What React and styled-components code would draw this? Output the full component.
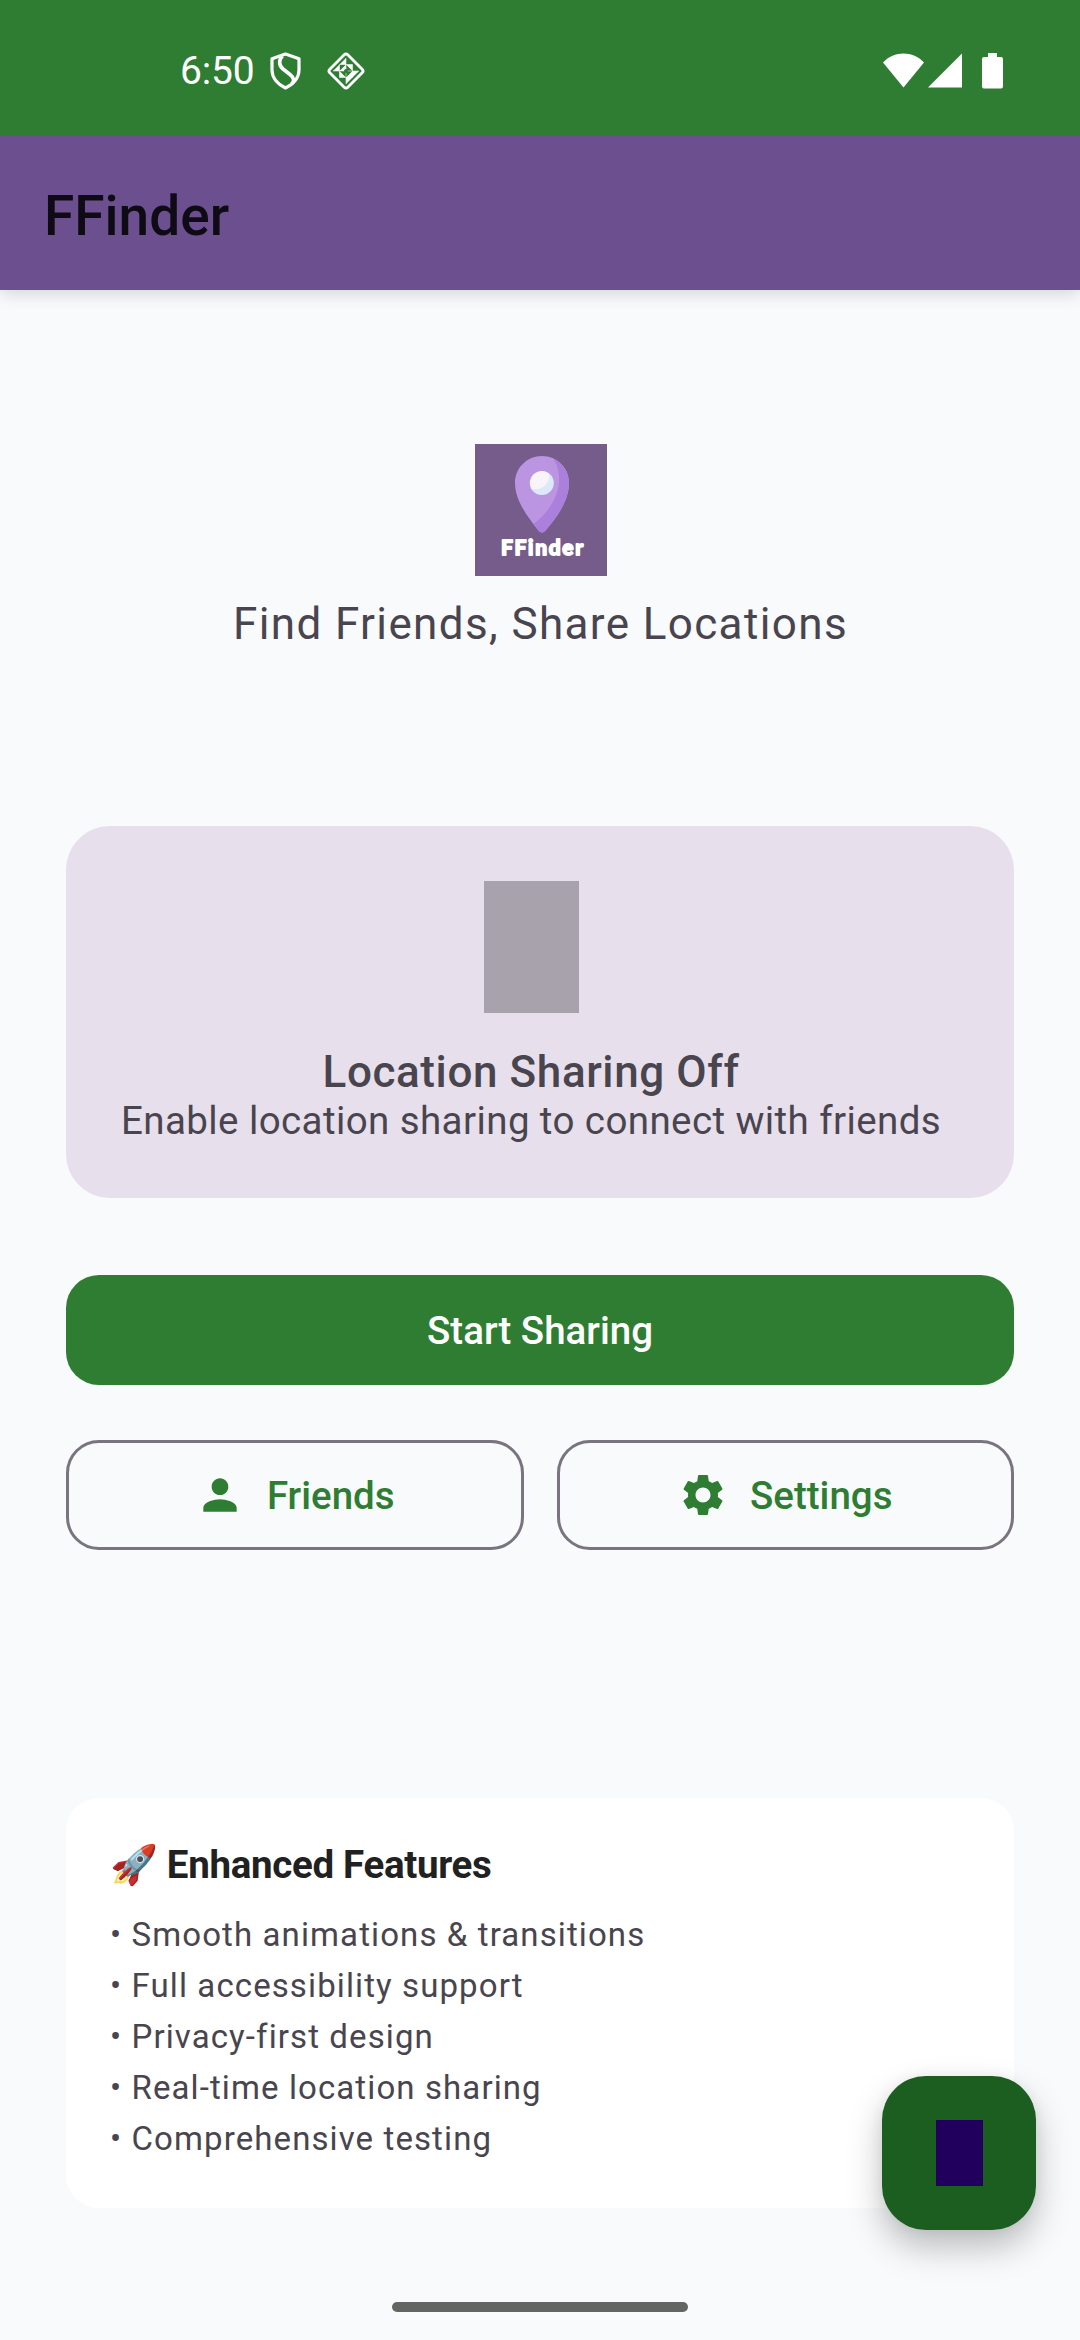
import React from "react";
import styled, { createGlobalStyle } from "styled-components";

const Global = createGlobalStyle`
  *, *::before, *::after { box-sizing: border-box; }
  body { margin: 0; background: #f8fafc; font-family: Roboto, "Noto Sans", sans-serif; color: #49454f; }
  h1, h2, h3, p, ul { margin: 0; padding: 0; font-weight: 400; }
  button { font: inherit; margin: 0; padding: 0; cursor: pointer; }
`;

const Screen = styled.div`
  position: relative;
  width: 1080px;
  height: 2340px;
  display: flex;
  flex-direction: column;
  overflow: hidden;
  background: #f8fafc;
`;

const StatusBar = styled.header`
  position: relative;
  z-index: 1;
  flex: none;
  height: 136px;
  padding: 6px 77px 0 180px;
  display: flex;
  align-items: center;
  background: #2e7d32;
  color: #fff;
`;

const Clock = styled.span`
  width: 90px;
  font-size: 39px;
  line-height: 46px;
  letter-spacing: -0.2px;
`;

const StatusIcons = styled.div`
  display: flex;
  align-items: center;
  gap: ${(p) => p.$gap}px;
  margin-left: ${(p) => (p.$end ? "auto" : "0")};
  svg { display: block; }
`;

const AppBar = styled.div`
  flex: none;
  height: 154px;
  padding: 5px 44px 0;
  display: flex;
  align-items: center;
  background: #6c4f8e;
  box-shadow: 0 4px 16px rgba(0, 0, 0, 0.15);
`;

const AppTitle = styled.h1`
  font-size: 55px;
  line-height: 64px;
  font-weight: 500;
  color: #0f0b14;
`;

const Content = styled.main`
  flex: 1;
  padding: 154px 66px 0;
  display: flex;
  flex-direction: column;
`;

const Hero = styled.section`
  height: 382px;
  display: flex;
  flex-direction: column;
  align-items: center;
`;

const Logo = styled.svg`
  display: block;
  margin-left: 2px;
`;

const Tagline = styled.p`
  margin: 22px 0 0 1px;
  font-size: 44px;
  line-height: 52px;
  letter-spacing: 1.375px;
  white-space: nowrap;
`;

const StatusCard = styled.section`
  height: 372px;
  padding: 55px;
  border-radius: 44px;
  background: #e7dfeb;
  display: flex;
`;

const StatusColumn = styled.div`
  display: flex;
  flex-direction: column;
  align-items: center;
`;

const StatusGlyph = styled.div`
  width: 95px;
  height: 132px;
  margin-bottom: 33px;
  background: #a8a2ad;
`;

const StatusTitle = styled.h2`
  font-size: 44px;
  line-height: 52px;
  font-weight: 500;
  letter-spacing: 0.6px;
`;

const StatusText = styled.p`
  font-size: 38.5px;
  line-height: 45px;
  letter-spacing: 0.41px;
  white-space: nowrap;
`;

const PrimaryButton = styled.button`
  height: 110px;
  margin-top: 77px;
  border: 0;
  border-radius: 33px;
  background: #2e7d32;
  color: #fff;
  font-size: 38.5px;
  font-weight: 500;
`;

const ButtonRow = styled.div`
  display: flex;
  gap: 33px;
  margin-top: 55px;
`;

const OutlineButton = styled.button`
  flex: 1;
  height: 110px;
  border: 3px solid #79747e;
  border-radius: 33px;
  background: transparent;
  color: #2e7d32;
  display: flex;
  align-items: center;
  justify-content: center;
  gap: 22px;
  font-size: 38.5px;
  font-weight: 500;
`;

const Features = styled.section`
  height: 410px;
  margin-top: 248px;
  padding: 44px;
  border-radius: 33px;
  background: #fff;
`;

const FeaturesTitle = styled.h3`
  height: 45px;
  font-family: Roboto, "Noto Color Emoji", sans-serif;
  font-size: 38.5px;
  line-height: 45px;
  font-weight: 700;
  letter-spacing: -0.32px;
  color: #212121;
  white-space: nowrap;
`;

const FeatureList = styled.ul`
  margin-top: 22px;
  list-style: none;
  font-size: 33px;
  line-height: 51px;
  letter-spacing: 1.1px;
`;

const Fab = styled.button`
  position: absolute;
  right: 44px;
  bottom: 110px;
  width: 154px;
  height: 154px;
  border: 0;
  border-radius: 44px;
  background: #1b5e20;
  display: grid;
  place-items: center;
  box-shadow: 0 17px 34px rgba(0, 0, 0, 0.25), 0 0 14px rgba(0, 0, 0, 0.05);
`;

const FabGlyph = styled.span`
  width: 47px;
  height: 66px;
  margin-left: 1px;
  background: #21005d;
`;

const NavBar = styled.nav`
  flex: none;
  height: 66px;
  padding-top: 28px;
  display: flex;
  justify-content: center;
`;

const NavHandle = styled.div`
  width: 296px;
  height: 10px;
  border-radius: 5px;
  background: #636563;
`;

const ShieldIcon = () => (
  <svg width="31" height="38" viewBox="0 0 31 38" fill="none" stroke="#fff" strokeWidth="3.2" strokeLinejoin="round">
    <path d="M15.5 2 L29 6.8 V18 C29 26 23 32.5 15.5 36 C8 32.5 2 26 2 18 V6.8 Z" />
    <path d="M12.5 4 C8.5 8 8.800 13.500 13 17 L20 22.500 C24.500 26 24.500 29.500 21.500 32" strokeWidth="3.6" />
  </svg>
);

const DiamondIcon = () => (
  <svg width="40" height="40" viewBox="0 0 40 40" fill="none">
    <rect x="7.3" y="7.3" width="25.4" height="25.4" rx="2.5" transform="rotate(45 20 20)" stroke="#fff" strokeWidth="2.8" />
    <g fill="#fff">
      <path d="M20 7 V13.5 H13.5Z M13.5 13.5 V20 H7Z M20 13.5 H26.5 V20Z M20 13.5 V20 H13.5Z" />
      <path d="M33 20 L26.5 26.5 V20Z M26.5 20 V26.5 H20Z M20 26.5 H26.5 L20 33Z M13.5 20 L20 26.5 H13.5Z" />
    </g>
    <path d="M13.5 13.5 H26.5 V26.5 H13.5Z M20 7 V33 M7 20 H33" stroke="#fff" strokeOpacity=".55" strokeWidth="1" />
    <circle cx="20" cy="20" r="2" fill="#2e7d32" />
  </svg>
);

const WifiIcon = () => (
  <svg width="41" height="36" viewBox="0 0 41 36" fill="#fff">
    <path d="M0 9.5 C11-2.5 30-2.5 41 9.5 L20.5 34.500Z" />
  </svg>
);

const SignalIcon = () => (
  <svg width="34" height="36" viewBox="0 0 34 36" fill="#fff">
    <path d="M34 .5 V34.500 H0Z" />
  </svg>
);

const Battery = styled.svg`
  margin-left: 16px;
`;

const BatteryIcon = () => (
  <Battery width="21" height="37" viewBox="0 0 21 37" fill="#fff">
    <path d="M6 0 H15 V4 H19 Q21 4 21 6 V33.500 Q21 35.500 19 35.500 H2 Q0 35.500 0 33.500 V6 Q0 4 2 4 H6Z" />
  </Battery>
);

const PersonIcon = () => (
  <svg width="50" height="50" viewBox="0 0 24 24" fill="currentColor">
    <path d="M12 12c2.210 0 4-1.790 4-4s-1.790-4-4-4-4 1.790-4 4 1.790 4 4 4zm0 2c-2.670 0-8 1.340-8 4v2h16v-2c0-2.660-5.330-4-8-4z" />
  </svg>
);

const GearIcon = () => (
  <svg width="50" height="50" viewBox="0 0 24 24" fill="currentColor">
    <path d="M19.140 12.940c.04-.3.060-.61.060-.94 0-.32-.02-.64-.07-.94l2.030-1.580c.18-.14.23-.41.120-.61l-1.920-3.320c-.12-.22-.37-.29-.59-.22l-2.390.96c-.5-.38-1.030-.7-1.620-.94L14.400 2.810c-.04-.24-.24-.41-.48-.41h-3.840c-.24 0-.43.170-.47.410L9.250 5.350c-.59.240-1.130.57-1.620.94l-2.390-.96c-.22-.08-.47 0-.59.220L2.740 8.870c-.12.210-.08.470.12.610l2.030 1.580c-.05.300-.09.630-.09.940s.020.640.070.940l-2.030 1.580c-.18.140-.23.410-.12.610l1.920 3.320c.12.220.37.290.59.220l2.390-.96c.5.380 1.030.7 1.620.94l.36 2.540c.05.240.24.410.48.410h3.840c.24 0 .44-.17.470-.41l.36-2.540c.59-.24 1.130-.56 1.620-.94l2.390.96c.22.080.47 0 .59-.22l1.920-3.320c.12-.22.070-.47-.12-.61l-2.010-1.580zM12 15.600c-1.980 0-3.600-1.620-3.600-3.600s1.620-3.600 3.600-3.600 3.600 1.620 3.600 3.600-1.620 3.600-3.600 3.600z" />
  </svg>
);

const LogoMark = () => (
  <Logo width="132" height="132" viewBox="0 0 132 132">
    <rect width="132" height="132" fill="#755c8b" />
    <path d="M67 12 C52 12 40 24 40 39 C40 57 53 73 63 86 Q67 91 71 86 C82 73 94 57 94 39 C94 24 82 12 67 12Z" fill="#bb95e2" />
    <path d="M78 14.500 C88 19 94 28 94 39 C94 57 82 73 71 86 Q67 91 63 86 L58.500 80 C74 68 84 52 84 36 C84 27 82 20 78 14.500Z" fill="#ab80dc" />
    <circle cx="66.800" cy="39" r="12" fill="#dbe9fb" />
    <path d="M74 29.500 C76 38 68 47 56.500 45 A12 12 0 0 1 74 29.500Z" fill="#f8f4fa" />
    <text x="26" y="111" textLength="82" lengthAdjust="spacing" fontFamily="Lato, sans-serif" fontWeight="700" fontSize="21" fill="#fff" stroke="#fff" strokeWidth="1.8" strokeLinejoin="round">FFinder</text>
  </Logo>
);

const features = [
  "Smooth animations & transitions",
  "Full accessibility support",
  "Privacy-first design",
  "Real-time location sharing",
  "Comprehensive testing",
];

export default function App() {
  return (
    <Screen>
      <Global />
      <StatusBar>
        <Clock>6:50</Clock>
        <StatusIcons $gap={25}>
          <ShieldIcon />
          <DiamondIcon />
        </StatusIcons>
        <StatusIcons $gap={4} $end>
          <WifiIcon />
          <SignalIcon />
          <BatteryIcon />
        </StatusIcons>
      </StatusBar>
      <AppBar>
        <AppTitle>FFinder</AppTitle>
      </AppBar>
      <Content>
        <Hero>
          <LogoMark />
          <Tagline>Find Friends, Share Locations</Tagline>
        </Hero>
        <StatusCard>
          <StatusColumn>
            <StatusGlyph />
            <StatusTitle>Location Sharing Off</StatusTitle>
            <StatusText>Enable location sharing to connect with friends</StatusText>
          </StatusColumn>
        </StatusCard>
        <PrimaryButton>Start Sharing</PrimaryButton>
        <ButtonRow>
          <OutlineButton><PersonIcon />Friends</OutlineButton>
          <OutlineButton><GearIcon />Settings</OutlineButton>
        </ButtonRow>
        <Features>
          <FeaturesTitle>🚀 Enhanced Features</FeaturesTitle>
          <FeatureList>
            {features.map((item) => (
              <li key={item}>• {item}</li>
            ))}
          </FeatureList>
        </Features>
      </Content>
      <NavBar>
        <NavHandle />
      </NavBar>
      <Fab aria-label="Action">
        <FabGlyph />
      </Fab>
    </Screen>
  );
}
